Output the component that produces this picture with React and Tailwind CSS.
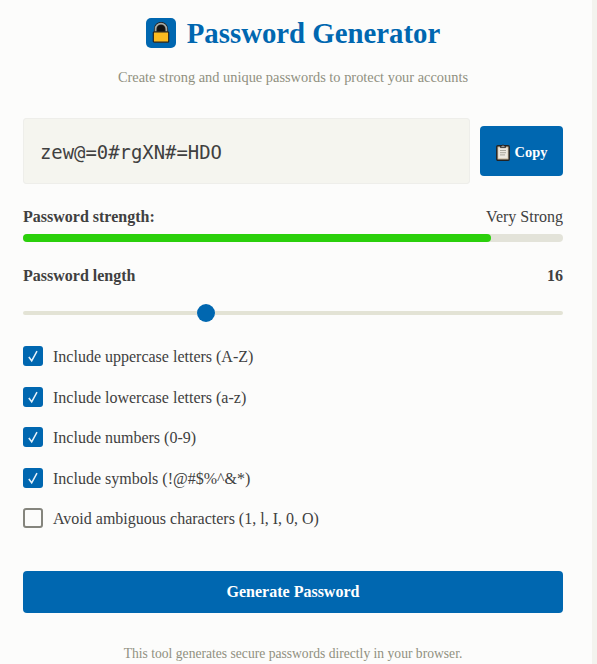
const options = [
  { label: "Include uppercase letters (A-Z)", checked: true },
  { label: "Include lowercase letters (a-z)", checked: true },
  { label: "Include numbers (0-9)", checked: true },
  { label: "Include symbols (!@#$%^&*)", checked: true },
  { label: "Avoid ambiguous characters (1, l, I, 0, O)", checked: false },
];

function LockIcon() {
  return (
    <svg width="18" height="22" viewBox="0 0 18 22" fill="none">
      <path d="M3 10V7.5a6 6 0 0 1 12 0V10z" fill="#111" />
      <path d="M3.6 10.5V7a5.4 5.4 0 0 1 10.8 0v3.5" stroke="#222" strokeWidth="3.4" />
      <path d="M3.6 10.5V7a5.4 5.4 0 0 1 10.8 0v3.5" stroke="#a3aaa6" strokeWidth="1.7" />
      <rect x="1.3" y="9.8" width="15.4" height="10.4" rx="1" fill="#fbba20" stroke="#222" strokeWidth="1.2" />
    </svg>
  );
}

function ClipboardIcon() {
  return (
    <svg width="14" height="17" viewBox="0 0 14 17" fill="none">
      <rect x="0.8" y="1.8" width="12.4" height="14.4" rx="1" fill="#c9b79a" stroke="#222" strokeWidth="1.4" />
      <rect x="2.3" y="3.6" width="9.4" height="10.8" fill="#ece8e0" />
      <path d="M4.5 3.6V2h1.4a1.1 1.1 0 0 1 2.2 0h1.4v1.6z" fill="#999" stroke="#222" strokeWidth="0.8" />
      <path d="M4 6.5h6M4 8.7h6M4 10.9h5" stroke="#a9a79d" strokeWidth="1" />
    </svg>
  );
}

function CheckRow({ label, checked }) {
  return (
    <label className="flex h-5 items-center gap-[10px] text-[16px] leading-5">
      {checked ? (
        <span className="flex size-5 items-center justify-center rounded-[3px] bg-[#0067b0]">
          <svg width="12" height="14" viewBox="0 0 12 14" fill="none">
            <path d="M1.8 8 4.7 11.8 10 2.2" stroke="#e8f3fa" strokeWidth="1.5" />
          </svg>
        </span>
      ) : (
        <span className="size-5 rounded-[3px] border-2 border-[#85857d]" />
      )}
      <span className="pt-0.5">{label}</span>
    </label>
  );
}

export default function App() {
  return (
    <div className="h-[664px] overflow-hidden border-r-[5px] border-[#f3f3ee] bg-[#fcfcfb] pr-[29px] pl-[23px] font-['Liberation_Serif',serif] text-[#404040]">
      <header className="pt-[18px] text-center">
        <h1 className="flex h-[30px] items-center justify-center gap-[11px] text-[28.8px] font-bold text-[#0067b0]">
          <span className="flex size-[30px] items-center justify-center rounded-[5px] bg-[#0067b0]">
            <LockIcon />
          </span>
          <span className="pt-0.5">Password Generator</span>
        </h1>
        <p className="mt-[19px] text-[14.4px] leading-5 text-[#909080]">
          Create strong and unique passwords to protect your accounts
        </p>
      </header>

      <div className="mt-[31px] flex items-center gap-[10px]">
        <div className="flex h-[66px] flex-1 items-center rounded-[3px] border border-[#eeeeea] bg-[#f5f5ef] pt-0.5 pl-4 font-['DejaVu_Sans_Mono',monospace] text-[18.9px]">
          zew@=0#rgXN#=HDO
        </div>
        <button className="flex h-[50px] w-[83px] items-center justify-center gap-[5px] rounded-[4px] bg-[#0067b0] pt-0.5 text-[14.4px] font-bold text-white">
          <ClipboardIcon />
          <span className="pt-0.5">Copy</span>
        </button>
      </div>

      <section className="mt-[22px]">
        <div className="flex h-5 items-center justify-between pt-0.5 text-[16px]">
          <span className="font-bold">Password strength:</span>
          <span>Very Strong</span>
        </div>
        <div className="mt-2 h-2 rounded-full bg-[#e3e3d9]">
          <div className="h-2 w-[468px] rounded-full bg-[#2bd00b]" />
        </div>
      </section>

      <section className="mt-[23px]">
        <div className="flex h-5 items-center justify-between pt-0.5 text-[16px] font-bold">
          <span>Password length</span>
          <span>16</span>
        </div>
        <div className="mt-[19px] flex h-[18px] items-center">
          <div className="h-1 w-[174px] rounded-l-full bg-[#e3e3d5]" />
          <div className="size-[18px] rounded-full bg-[#0067b0]" />
          <div className="h-1 flex-1 rounded-r-full bg-[#e3e3d5]" />
        </div>
      </section>

      <div className="mt-6 flex flex-col gap-[20.6px]">
        {options.map((option) => (
          <CheckRow key={option.label} {...option} />
        ))}
      </div>

      <button className="mt-[42.6px] block h-[42px] w-full rounded-[4px] bg-[#0067b0] pt-px text-[16px] font-bold text-white">
        Generate Password
      </button>

      <p className="mt-[31px] text-center text-[13.6px] leading-5 text-[#909080]">
        This tool generates secure passwords directly in your browser.
      </p>
    </div>
  );
}
